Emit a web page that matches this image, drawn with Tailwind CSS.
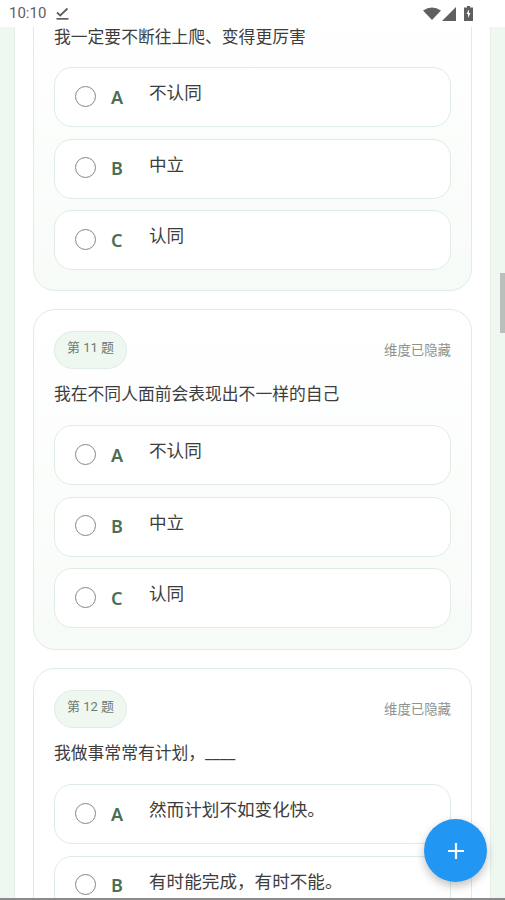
<!DOCTYPE html>
<html lang="zh">
<head>
    <meta charset="UTF-8">
    <title>题目</title>
    <script src="https://cdn.jsdelivr.net/npm/@tailwindcss/browser@4"></script>
</head>
<body class="m-0 bg-white font-['Roboto','Noto_Sans_CJK_SC',sans-serif]">
<div class="relative w-[505px] h-[900px] overflow-hidden bg-[#eff7f1]">

    <!-- status bar -->
    <div class="h-[27px] bg-white flex items-center pl-[9px] pr-[32px] text-[#5f5f5f]">
        <span class="text-[15px] leading-none">10:10</span>
        <svg class="ml-[10px]" width="13" height="14" viewBox="0 0 13 14"><path d="M1 5.5 L4.2 8.4 L11.5 1.5" fill="none" stroke="#5f5f5f" stroke-width="1.8"/><rect x="0.5" y="11" width="12" height="1.7" fill="#5f5f5f"/></svg>
        <svg class="ml-auto" width="18" height="13" viewBox="0 0 18 13"><path d="M0 3.5 Q9 -2.5 18 3.5 L9 13 Z" fill="#5f5f5f"/></svg>
        <svg class="ml-[1px]" width="14" height="14" viewBox="0 0 14 14"><path d="M14 0 V14 H0 Z" fill="#5f5f5f"/></svg>
        <svg class="ml-[8px]" width="9" height="15" viewBox="0 0 9 15"><path d="M3 0 H6 V1.5 H9 V15 H0 V1.5 H3 Z" fill="#5f5f5f"/><path d="M5 3.5 L2.5 8 H4 V12 L6.5 7 H5 Z" fill="#fff"/></svg>
    </div>

    <!-- list panel -->
    <div class="ml-[14px] w-[477px] h-[873px] overflow-hidden bg-white border-x border-[#e4f0e7] px-[18px] flex flex-col gap-[18px]">

        <section class="shrink-0 -mt-[24px] h-[288px] rounded-b-[22px] border border-[#dfece3] bg-gradient-to-b from-white to-[#f7fbf8] px-5 pt-[24px]">
            <p class="text-[16.8px] leading-[18px] text-[#3d3d3d]">我一定要不断往上爬、变得更厉害</p>
            <div class="mt-[21px] flex flex-col gap-[11.5px]">
                <div class="h-[60px] rounded-[18px] border border-[#dfece3] bg-white flex items-center pl-5">
                    <span class="mb-[2px] w-[21px] h-[21px] rounded-full border-[1.5px] border-[#868686]"></span>
                    <span class="ml-[15px] w-[38px] text-[18px] font-semibold text-[#4a6f55] font-['Noto_Sans',sans-serif]">A</span>
                    <span class="text-[17.6px] text-[#3d3d3d] pb-[7px]">不认同</span>
                </div>
                <div class="h-[60px] rounded-[18px] border border-[#dfece3] bg-white flex items-center pl-5">
                    <span class="mb-[2px] w-[21px] h-[21px] rounded-full border-[1.5px] border-[#868686]"></span>
                    <span class="ml-[15px] w-[38px] text-[18px] font-semibold text-[#4a6f55] font-['Noto_Sans',sans-serif]">B</span>
                    <span class="text-[17.6px] text-[#3d3d3d] pb-[7px]">中立</span>
                </div>
                <div class="h-[60px] rounded-[18px] border border-[#dfece3] bg-white flex items-center pl-5">
                    <span class="mb-[2px] w-[21px] h-[21px] rounded-full border-[1.5px] border-[#868686]"></span>
                    <span class="ml-[15px] w-[38px] text-[18px] font-semibold text-[#4a6f55] font-['Noto_Sans',sans-serif]">C</span>
                    <span class="text-[17.6px] text-[#3d3d3d] pb-[7px]">认同</span>
                </div>
            </div>
        </section>

        <section class="shrink-0 h-[341px] rounded-[22px] border border-[#dfece3] bg-gradient-to-b from-white to-[#f7fbf8] px-5 pt-[21px]">
            <div class="flex justify-between items-center h-[38px]">
                <span class="h-[38px] w-[73px] rounded-full bg-[#eff7f1] border border-[#e0ece3] text-[13px] text-[#6f7b73] flex items-center justify-center pb-[4px]">第 11 题</span>
                <span class="text-[13.4px] text-[#8c948f] pt-[2px]">维度已隐藏</span>
            </div>
            <p class="mt-[13px] text-[16.8px] leading-[24px] text-[#3d3d3d]">我在不同人面前会表现出不一样的自己</p>
            <div class="mt-[19px] flex flex-col gap-[11.5px]">
                <div class="h-[60px] rounded-[18px] border border-[#dfece3] bg-white flex items-center pl-5">
                    <span class="mb-[2px] w-[21px] h-[21px] rounded-full border-[1.5px] border-[#868686]"></span>
                    <span class="ml-[15px] w-[38px] text-[18px] font-semibold text-[#4a6f55] font-['Noto_Sans',sans-serif]">A</span>
                    <span class="text-[17.6px] text-[#3d3d3d] pb-[7px]">不认同</span>
                </div>
                <div class="h-[60px] rounded-[18px] border border-[#dfece3] bg-white flex items-center pl-5">
                    <span class="mb-[2px] w-[21px] h-[21px] rounded-full border-[1.5px] border-[#868686]"></span>
                    <span class="ml-[15px] w-[38px] text-[18px] font-semibold text-[#4a6f55] font-['Noto_Sans',sans-serif]">B</span>
                    <span class="text-[17.6px] text-[#3d3d3d] pb-[7px]">中立</span>
                </div>
                <div class="h-[60px] rounded-[18px] border border-[#dfece3] bg-white flex items-center pl-5">
                    <span class="mb-[2px] w-[21px] h-[21px] rounded-full border-[1.5px] border-[#868686]"></span>
                    <span class="ml-[15px] w-[38px] text-[18px] font-semibold text-[#4a6f55] font-['Noto_Sans',sans-serif]">C</span>
                    <span class="text-[17.6px] text-[#3d3d3d] pb-[7px]">认同</span>
                </div>
            </div>
        </section>

        <section class="shrink-0 h-[341px] rounded-[22px] border border-[#dfece3] bg-white px-5 pt-[21px]">
            <div class="flex justify-between items-center h-[38px]">
                <span class="h-[38px] w-[73px] rounded-full bg-[#eff7f1] border border-[#e0ece3] text-[13px] text-[#6f7b73] flex items-center justify-center pb-[4px]">第 12 题</span>
                <span class="text-[13.4px] text-[#8c948f] pt-[2px]">维度已隐藏</span>
            </div>
            <p class="mt-[13px] text-[16.8px] leading-[24px] text-[#3d3d3d]">我做事常常有计划，____</p>
            <div class="mt-[19px] flex flex-col gap-[11.5px]">
                <div class="h-[60px] rounded-[18px] border border-[#dfece3] bg-white flex items-center pl-5">
                    <span class="mb-[2px] w-[21px] h-[21px] rounded-full border-[1.5px] border-[#868686]"></span>
                    <span class="ml-[15px] w-[38px] text-[18px] font-semibold text-[#4a6f55] font-['Noto_Sans',sans-serif]">A</span>
                    <span class="text-[17.6px] text-[#3d3d3d] pb-[7px]">然而计划不如变化快。</span>
                </div>
                <div class="h-[60px] rounded-[18px] border border-[#dfece3] bg-white flex items-center pl-5">
                    <span class="mb-[2px] w-[21px] h-[21px] rounded-full border-[1.5px] border-[#868686]"></span>
                    <span class="ml-[15px] w-[38px] text-[18px] font-semibold text-[#4a6f55] font-['Noto_Sans',sans-serif]">B</span>
                    <span class="text-[17.6px] text-[#3d3d3d] pb-[7px]">有时能完成，有时不能。</span>
                </div>
            </div>
        </section>
    </div>

    <!-- scrollbar thumb -->
    <div class="absolute left-[500px] top-[273px] w-[5px] h-[60px] bg-[#b9bfbb]"></div>

    <!-- add button -->
    <div class="absolute left-[424px] top-[819px] w-[63px] h-[63px] rounded-full bg-[#2196f3] shadow-[0_4px_10px_rgba(0,0,0,0.25)] flex items-center justify-center">
        <svg width="16" height="16" viewBox="0 0 16 16"><path d="M8 0 V16 M0 8 H16" stroke="#fff" stroke-width="2.2"/></svg>
    </div>

    <!-- bottom edge -->
    <div class="absolute left-0 right-0 bottom-0 h-[2px] bg-[#8a8a8a]"></div>
</div>
</body>
</html>
